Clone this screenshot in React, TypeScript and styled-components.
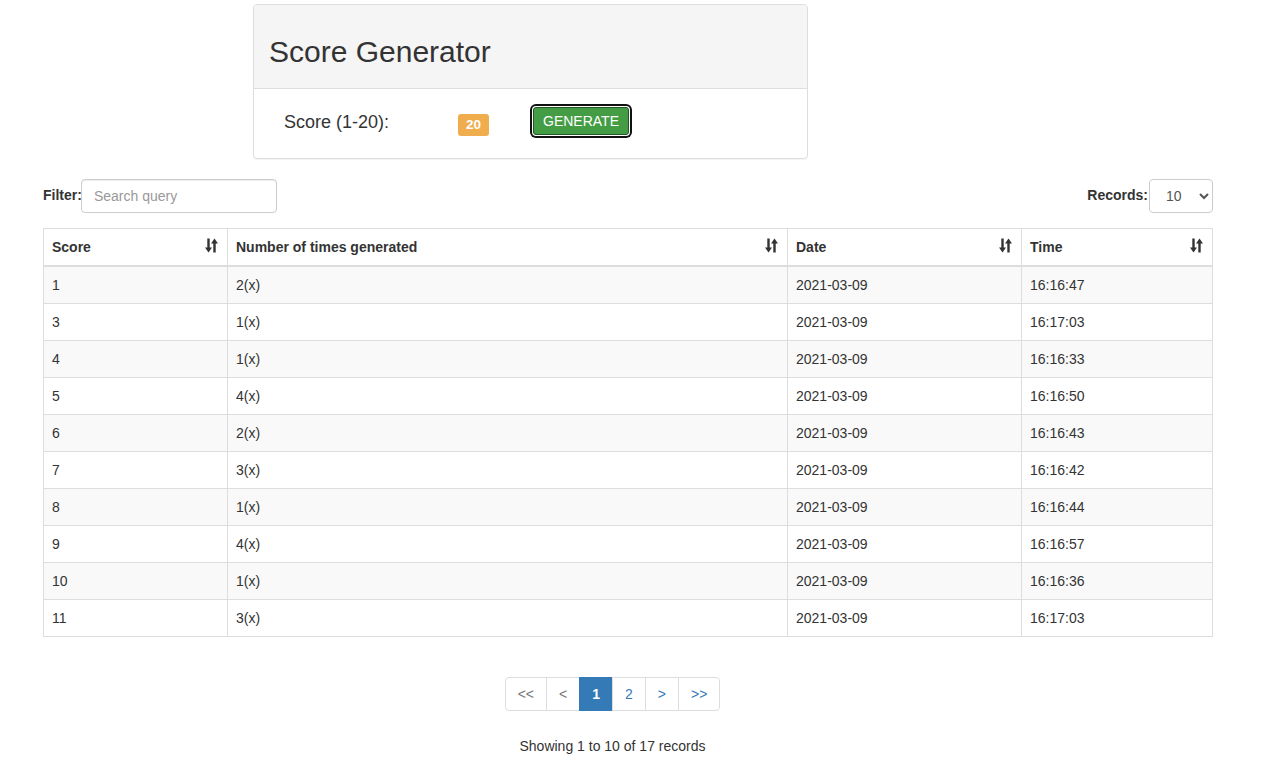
import React from "react";
import styled, { createGlobalStyle } from "styled-components";

const GlobalStyle = createGlobalStyle`
  * { box-sizing: border-box; }
  body {
    margin: 0;
    font-family: "Liberation Sans", Arial, Helvetica, sans-serif;
    font-size: 14px;
    line-height: 1.42857;
    color: #333;
    background: #fff;
  }
`;

const Page = styled.div`
  padding: 4px 0 0 43px;
  width: 1213px;
`;

const Panel = styled.section`
  margin-left: 210px;
  width: 555px;
  border: 1px solid #ddd;
  border-radius: 4px;
  box-shadow: 0 1px 1px rgba(0, 0, 0, 0.05);
  overflow: hidden;
`;

const PanelHeading = styled.header`
  background: #f5f5f5;
  border-bottom: 1px solid #ddd;
  padding: 30px 15px 20px;
`;

const Title = styled.h1`
  margin: 0;
  font-size: 30px;
  font-weight: 400;
  line-height: 33px;
  color: #333;
`;

const PanelBody = styled.div`
  display: flex;
  align-items: flex-start;
  padding: 18px 15px 22px 30px;
`;

const ScoreLabel = styled.span`
  font-size: 18px;
  line-height: 20px;
  width: 174px;
  margin-top: 5px;
`;

const Badge = styled.span`
  display: inline-block;
  font-size: 13.5px;
  font-weight: 700;
  line-height: 1;
  color: #fff;
  background: #f0ad4e;
  border-radius: 3px;
  padding: 4px 8px 4px;
  margin-top: 7px;
`;

const GenerateButton = styled.button`
  margin-left: 44px;
  font-family: inherit;
  font-size: 14px;
  line-height: 20px;
  color: #fff;
  background: #449d44;
  border: 1px solid #255625;
  border-radius: 3px;
  padding: 3px 9px;
  box-shadow: 0 0 0 1px #fff, 0 0 0 3px #111;
  cursor: pointer;
`;

const Controls = styled.div`
  display: flex;
  justify-content: space-between;
  align-items: center;
  margin-top: 20px;
  width: 1170px;
`;

const Field = styled.label`
  display: flex;
  align-items: center;
  font-weight: 700;
  font-size: 14px;
`;

const SearchInput = styled.input`
  margin-left: -1px;
  width: 196px;
  height: 34px;
  padding: 6px 12px;
  font-family: inherit;
  font-size: 14px;
  color: #555;
  border: 1px solid #ccc;
  border-radius: 4px;
  box-shadow: inset 0 1px 1px rgba(0, 0, 0, 0.075);
  &::placeholder { color: #999; }
`;

const Select = styled.select`
  margin-left: 1px;
  width: 64px;
  height: 34px;
  padding: 6px 8px 6px 12px;
  font-family: inherit;
  font-size: 14px;
  color: #555;
  background: #fff;
  border: 1px solid #ccc;
  border-radius: 4px;
`;

const Table = styled.table`
  margin-top: 15px;
  width: 1169px;
  table-layout: fixed;
  border-collapse: collapse;
  border: 1px solid #ddd;
`;

const Th = styled.th`
  padding: 8px;
  text-align: left;
  font-weight: 700;
  border: 1px solid #ddd;
  border-bottom-width: 2px;
  line-height: 20px;
`;

const HeadInner = styled.div`
  display: flex;
  justify-content: space-between;
  align-items: flex-start;
  padding-right: 1px;
`;

const Row = styled.tr<{ $striped: boolean }>`
  background: ${(p) => (p.$striped ? "#f9f9f9" : "#fff")};
`;

const Td = styled.td`
  padding: 8px;
  border: 1px solid #ddd;
  line-height: 20px;
  color: #333;
`;

const Pager = styled.nav`
  display: flex;
  justify-content: center;
  margin: 40px 0 0 0;
  width: 1139px;
`;

const PageItem = styled.span<{ $active?: boolean; $disabled?: boolean }>`
  padding: 6px 12px;
  line-height: 20px;
  border: 1px solid ${(p) => (p.$active ? "#337ab7" : "#ddd")};
  margin-left: -1px;
  background: ${(p) => (p.$active ? "#337ab7" : "#fff")};
  color: ${(p) => (p.$active ? "#fff" : p.$disabled ? "#777" : "#337ab7")};
  font-weight: ${(p) => (p.$active ? 700 : 400)};
  &:first-child { border-radius: 4px 0 0 4px; margin-left: 0; }
  &:last-child { border-radius: 0 4px 4px 0; }
`;

const Summary = styled.p`
  margin: 25px 0 0;
  width: 1139px;
  text-align: center;
  font-size: 14px;
  line-height: 20px;
`;

const SortIcon = () => (
  <svg width="13" height="15" viewBox="0 0 13 15" style={{ marginTop: 1 }}>
    <path d="M3.5 0.5 V11.5" stroke="#333" strokeWidth="2.4" />
    <path d="M0 9.5 L3.5 14.5 L7 9.5 Z" fill="#333" />
    <path d="M9.5 14.5 V3.5" stroke="#333" strokeWidth="2.4" />
    <path d="M6 5.5 L9.5 0.5 L13 5.5 Z" fill="#333" />
  </svg>
);

const rows: [string, string, string, string][] = [
  ["1", "2(x)", "2021-03-09", "16:16:47"],
  ["3", "1(x)", "2021-03-09", "16:17:03"],
  ["4", "1(x)", "2021-03-09", "16:16:33"],
  ["5", "4(x)", "2021-03-09", "16:16:50"],
  ["6", "2(x)", "2021-03-09", "16:16:43"],
  ["7", "3(x)", "2021-03-09", "16:16:42"],
  ["8", "1(x)", "2021-03-09", "16:16:44"],
  ["9", "4(x)", "2021-03-09", "16:16:57"],
  ["10", "1(x)", "2021-03-09", "16:16:36"],
  ["11", "3(x)", "2021-03-09", "16:17:03"],
];

const headers = ["Score", "Number of times generated", "Date", "Time"];
const widths = [184, 560, 234, 191];

export default function App() {
  return (
    <>
      <GlobalStyle />
      <Page>
        <Panel>
          <PanelHeading>
            <Title>Score Generator</Title>
          </PanelHeading>
          <PanelBody>
            <ScoreLabel>Score (1-20):</ScoreLabel>
            <Badge>20</Badge>
            <GenerateButton>GENERATE</GenerateButton>
          </PanelBody>
        </Panel>

        <Controls>
          <Field>
            Filter:
            <SearchInput placeholder="Search query" />
          </Field>
          <Field>
            Records:
            <Select defaultValue="10">
              <option value="10">10</option>
              <option value="20">20</option>
            </Select>
          </Field>
        </Controls>

        <Table>
          <colgroup>
            {widths.map((w, i) => (
              <col key={i} style={{ width: w }} />
            ))}
          </colgroup>
          <thead>
            <tr>
              {headers.map((h) => (
                <Th key={h}>
                  <HeadInner>
                    <span>{h}</span>
                    <SortIcon />
                  </HeadInner>
                </Th>
              ))}
            </tr>
          </thead>
          <tbody>
            {rows.map((r, i) => (
              <Row key={i} $striped={i % 2 === 0}>
                {r.map((c, j) => (
                  <Td key={j}>{c}</Td>
                ))}
              </Row>
            ))}
          </tbody>
        </Table>

        <Pager>
          <PageItem $disabled>&lt;&lt;</PageItem>
          <PageItem $disabled>&lt;</PageItem>
          <PageItem $active>1</PageItem>
          <PageItem>2</PageItem>
          <PageItem>&gt;</PageItem>
          <PageItem>&gt;&gt;</PageItem>
        </Pager>
        <Summary>Showing 1 to 10 of 17 records</Summary>
      </Page>
    </>
  );
}
